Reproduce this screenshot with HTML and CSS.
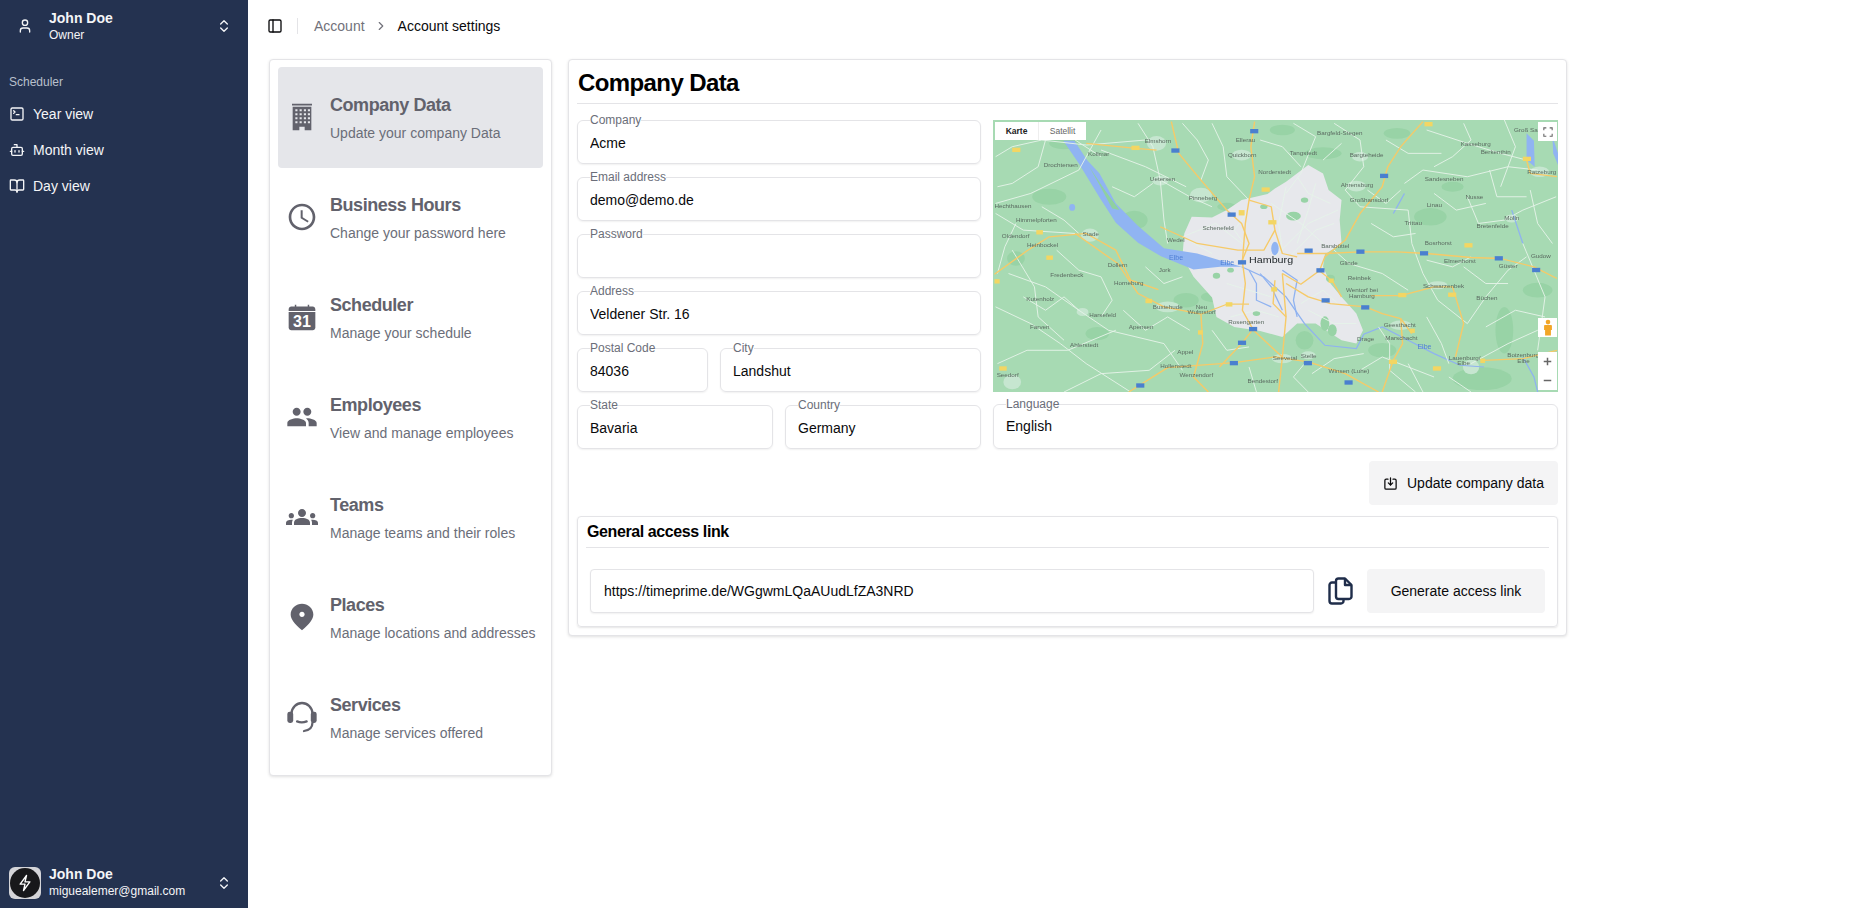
FILE: index.html
```html
<!DOCTYPE html>
<html lang="en">
<head>
<meta charset="utf-8">
<title>Account settings</title>
<link rel="stylesheet" href="styles.css">
</head>
<body>
<div class="app">
  <aside class="sidebar">
    <div class="team">
      <svg class="lu team-icon" viewBox="0 0 24 24"><path d="M19 21v-2a4 4 0 0 0-4-4H9a4 4 0 0 0-4 4v2"/><circle cx="12" cy="7" r="4"/></svg>
      <div class="who">
        <div class="who-name">John Doe</div>
        <div class="who-sub">Owner</div>
      </div>
      <svg class="lu updown" viewBox="0 0 24 24"><path d="m7 15 5 5 5-5"/><path d="m7 9 5-5 5 5"/></svg>
    </div>
    <div class="group-label">Scheduler</div>
    <nav class="nav">
      <a class="nav-row"><svg class="lu" viewBox="0 0 24 24"><path d="m7 11 2-2-2-2"/><path d="M11 13h4"/><rect x="3" y="3" width="18" height="18" rx="2"/></svg>Year view</a>
      <a class="nav-row"><svg class="lu" viewBox="0 0 24 24"><path d="M12 8V4H8"/><rect x="4" y="8" width="16" height="12" rx="2"/><path d="M2 14h2"/><path d="M20 14h2"/><path d="M15 13v2"/><path d="M9 13v2"/></svg>Month view</a>
      <a class="nav-row"><svg class="lu" viewBox="0 0 24 24"><path d="M12 7v14"/><path d="M3 18a1 1 0 0 1-1-1V4a1 1 0 0 1 1-1h5a4 4 0 0 1 4 4 4 4 0 0 1 4-4h5a1 1 0 0 1 1 1v13a1 1 0 0 1-1 1h-6a3 3 0 0 0-3 3 3 3 0 0 0-3-3z"/></svg>Day view</a>
    </nav>
    <div class="account">
      <div class="avatar">
        <div class="avatar-disc">
          <svg class="lu bolt" viewBox="0 0 24 24"><path d="M14 2 5.500 13.500H12L10 22l8.500-11.500H12z"/></svg>
        </div>
      </div>
      <div class="who">
        <div class="who-name">John Doe</div>
        <div class="who-sub">miguealemer@gmail.com</div>
      </div>
      <svg class="lu updown" viewBox="0 0 24 24"><path d="m7 15 5 5 5-5"/><path d="m7 9 5-5 5 5"/></svg>
    </div>
  </aside>

  <main class="main">
    <header class="topbar">
      <svg class="lu panel-icon" viewBox="0 0 24 24"><rect x="3" y="3" width="18" height="18" rx="2"/><path d="M9 3v18"/></svg>
      <span class="topbar-sep"></span>
      <span class="crumb">Account</span>
      <svg class="lu crumb-chev" viewBox="0 0 24 24"><path d="m9 18 6-6-6-6"/></svg>
      <span class="crumb-now">Account settings</span>
    </header>

    <div class="content">
      <section class="card menu">
        <a class="menu-item is-active">
          <svg class="menu-icon" viewBox="0 0 24 24"><path fill-rule="evenodd" d="M4.500 2h15v1.300h-15zM5 4.400h14V22h-5v-2.600h-4V22H5zM7 6.200v1.500h1.600V6.200zm3.200 0v1.500h1.600V6.200zm3.200 0v1.500H15V6.200zm3 0v1.500H18V6.200zM7 9.200v1.500h1.600V9.200zm3.200 0v1.500h1.600V9.200zm3.200 0v1.500H15V9.200zm3 0v1.500H18V9.200zM7 12.200v1.500h1.600v-1.500zm3.200 0v1.500h1.600v-1.500zm3.200 0v1.500H15v-1.500zm3 0v1.500H18v-1.500zM7 15.200v1.500h1.600v-1.500zm3.200 0v1.500h1.600v-1.500zm3.200 0v1.500H15v-1.500zm3 0v1.500H18v-1.500z"/></svg>
          <span class="menu-text"><span class="menu-title">Company Data</span><span class="menu-desc">Update your company Data</span></span>
        </a>
        <a class="menu-item">
          <svg class="menu-icon" viewBox="0 0 24 24"><path d="M11.990 2C6.470 2 2 6.480 2 12s4.470 10 9.990 10C17.520 22 22 17.520 22 12S17.520 2 11.990 2zM12 20c-4.420 0-8-3.580-8-8s3.580-8 8-8 8 3.580 8 8-3.580 8-8 8zm.5-13H11v6l5.250 3.150.75-1.230-4.500-2.670z"/></svg>
          <span class="menu-text"><span class="menu-title">Business Hours</span><span class="menu-desc">Change your password here</span></span>
        </a>
        <a class="menu-item">
          <svg class="menu-icon" viewBox="0 0 24 24"><path d="M2 6.200C2 5 2.900 4.100 4 4.100h2.600V2.900h1.100v1.200h8.600V2.900h1.100v1.200H20c1.100 0 2 .9 2 2.100v1.300H2z"/><path d="M2 8.300h20v11.600c0 1.100-.9 2-2 2H4c-1.100 0-2-.9-2-2z"/><text class="cal-num" x="12" y="19.800">31</text></svg>
          <span class="menu-text"><span class="menu-title">Scheduler</span><span class="menu-desc">Manage your schedule</span></span>
        </a>
        <a class="menu-item">
          <svg class="menu-icon" viewBox="0 0 24 24"><path d="M16 11c1.660 0 2.990-1.340 2.990-3S17.660 5 16 5c-1.660 0-3 1.340-3 3s1.340 3 3 3zm-8 0c1.660 0 2.990-1.340 2.990-3S9.660 5 8 5C6.340 5 5 6.340 5 8s1.340 3 3 3zm0 2c-2.330 0-7 1.170-7 3.500V19h14v-2.500c0-2.330-4.670-3.500-7-3.500zm8 0c-.29 0-.62.02-.97.05 1.160.84 1.970 1.970 1.970 3.450V19h6v-2.500c0-2.330-4.670-3.500-7-3.500z"/></svg>
          <span class="menu-text"><span class="menu-title">Employees</span><span class="menu-desc">View and manage employees</span></span>
        </a>
        <a class="menu-item">
          <svg class="menu-icon" viewBox="0 0 24 24"><path d="M12 12.750c1.630 0 3.070.39 4.240.9 1.080.48 1.760 1.560 1.760 2.730V18H6v-1.610c0-1.180.68-2.260 1.760-2.730 1.170-.52 2.610-.91 4.240-.91zM4 13c1.100 0 2-.9 2-2s-.9-2-2-2-2 .9-2 2 .9 2 2 2zm1.130 1.100c-.37-.06-.74-.1-1.130-.1-.99 0-1.930.21-2.780.58C.48 14.900 0 15.620 0 16.430V18h4.500v-1.610c0-.83.23-1.610.63-2.290zM20 13c1.100 0 2-.9 2-2s-.9-2-2-2-2 .9-2 2 .9 2 2 2zm4 3.430c0-.81-.48-1.530-1.220-1.850-.85-.37-1.790-.58-2.780-.58-.39 0-.76.04-1.130.1.4.68.63 1.460.63 2.290V18H24v-1.570zM12 6c1.660 0 3 1.340 3 3s-1.340 3-3 3-3-1.340-3-3 1.340-3 3-3z"/></svg>
          <span class="menu-text"><span class="menu-title">Teams</span><span class="menu-desc">Manage teams and their roles</span></span>
        </a>
        <a class="menu-item">
          <svg class="menu-icon" viewBox="0 0 24 24"><path d="M12 2c-4.200 0-8.500 3.220-8.500 8.200 0 3.320 2.830 7.250 8.500 11.800 5.670-4.550 8.500-8.480 8.500-11.800C20.500 5.220 16.200 2 12 2zm0 10c-1.100 0-2-.9-2-2s.9-2 2-2 2 .9 2 2-.9 2-2 2z"/></svg>
          <span class="menu-text"><span class="menu-title">Places</span><span class="menu-desc">Manage locations and addresses</span></span>
        </a>
        <a class="menu-item">
          <svg class="menu-icon" viewBox="0 0 24 24"><path class="hs-line" d="M4 9.500C4.500 4.500 8 1.500 12 1.500s7.500 3 8 8"/><rect x="1" y="8" width="4.400" height="8.500" rx="1.800"/><rect x="18.600" y="8" width="4.400" height="8.500" rx="1.800"/><path class="hs-line" d="M19.800 16.500c0 3-2.300 5.400-6.300 6"/><path class="hs-line" d="M8.300 15.300c2 .9 5 .9 7.200 0"/></svg>
          <span class="menu-text"><span class="menu-title">Services</span><span class="menu-desc">Manage services offered</span></span>
        </a>
      </section>

      <section class="card company">
        <h1 class="company-title">Company Data</h1>
        <div class="form-grid">
          <div class="form-stack">
            <fieldset class="field"><legend>Company</legend><input class="field-input" value="Acme"></fieldset>
            <fieldset class="field"><legend>Email address</legend><input class="field-input" value="demo@demo.de"></fieldset>
            <fieldset class="field"><legend>Password</legend><input class="field-input" type="password"></fieldset>
            <fieldset class="field"><legend>Address</legend><input class="field-input" value="Veldener Str. 16"></fieldset>
            <div class="field-row row-postal">
              <fieldset class="field"><legend>Postal Code</legend><input class="field-input" value="84036"></fieldset>
              <fieldset class="field"><legend>City</legend><input class="field-input" value="Landshut"></fieldset>
            </div>
          </div>

          <div class="map">
            <svg class="map-art" viewBox="8 30 1527 815" preserveAspectRatio="none">
              <rect x="8" y="30" width="1527" height="815" class="m-bg"/>
              <g class="m-patch">
                <ellipse cx="70" cy="445" rx="24" ry="22"/><ellipse cx="290" cy="670" rx="32" ry="20"/><ellipse cx="1190" cy="320" rx="44" ry="26"/>
                <ellipse cx="530" cy="570" rx="34" ry="22"/><ellipse cx="610" cy="560" rx="40" ry="16"/><ellipse cx="900" cy="130" rx="50" ry="18"/>
                <ellipse cx="1330" cy="805" rx="80" ry="34"/><ellipse cx="790" cy="60" rx="34" ry="16"/><ellipse cx="1390" cy="660" rx="24" ry="70"/>
                <ellipse cx="390" cy="330" rx="36" ry="28"/><ellipse cx="850" cy="690" rx="24" ry="28"/><ellipse cx="640" cy="290" rx="26" ry="12"/>
                <ellipse cx="160" cy="260" rx="46" ry="24"/><ellipse cx="1060" cy="720" rx="38" ry="22"/><ellipse cx="1250" cy="230" rx="30" ry="15"/>
                <ellipse cx="1480" cy="540" rx="40" ry="22"/><ellipse cx="200" cy="100" rx="40" ry="18"/><ellipse cx="1100" cy="70" rx="36" ry="16"/>
              </g>
              <g class="m-town">
                <ellipse cx="450" cy="100" rx="26" ry="22"/><ellipse cx="680" cy="135" rx="26" ry="16"/><ellipse cx="460" cy="212" rx="22" ry="14"/><ellipse cx="570" cy="255" rx="30" ry="22"/>
                <ellipse cx="270" cy="375" rx="24" ry="20"/><ellipse cx="1000" cy="140" rx="22" ry="14"/><ellipse cx="990" cy="228" rx="26" ry="16"/><ellipse cx="1410" cy="325" rx="18" ry="12"/>
                <ellipse cx="1485" cy="185" rx="26" ry="16"/><ellipse cx="1300" cy="770" rx="22" ry="22"/><ellipse cx="480" cy="590" rx="32" ry="16"/><ellipse cx="1110" cy="645" rx="30" ry="14"/>
                <ellipse cx="250" cy="605" rx="16" ry="12"/><ellipse cx="1210" cy="525" rx="26" ry="12"/><ellipse cx="60" cy="815" rx="24" ry="22"/><ellipse cx="790" cy="745" rx="28" ry="14"/><ellipse cx="860" cy="735" rx="20" ry="12"/>
              </g>
              <path class="m-city" d="M545 320 600 322 640 300 680 270 750 252 770 235 800 215 860 165 900 190 915 240 950 270 945 330 950 400 905 432 900 470 920 520 950 560 990 610 1008 660 990 700 950 690 880 640 830 640 790 680 730 662 660 650 612 620 600 562 550 500 520 440 525 370Z"/>
              <g class="m-patch">
                <ellipse cx="820" cy="318" rx="20" ry="13"/><ellipse cx="905" cy="640" rx="12" ry="22"/><ellipse cx="925" cy="660" rx="12" ry="18"/><ellipse cx="612" cy="497" rx="10" ry="9"/><ellipse cx="740" cy="290" rx="10" ry="7"/><ellipse cx="920" cy="505" rx="12" ry="11"/>
                <ellipse cx="850" cy="270" rx="10" ry="8"/><ellipse cx="650" cy="480" rx="9" ry="7"/><ellipse cx="720" cy="610" rx="10" ry="7"/>
              </g>
              <path class="m-water" d="M198 92 228 92 262 150 296 190 340 280 398 345 470 414 560 430 625 452 680 470 622 470 550 478 462 438 400 398 340 338 296 262 240 160Z"/>
              <path class="m-isle" d="M268 170 310 240 350 300 330 295 296 225Z"/>
              <path class="m-water" d="M1450 70 1470 92 1472 170 1450 150Z"/>
              <path class="m-water" d="M1520 80 1535 130 1535 165 1522 130Z"/>
              <ellipse class="m-water" cx="222" cy="292" rx="8" ry="10"/>
              <ellipse class="m-water" cx="770" cy="415" rx="10" ry="20"/>
              <g class="m-river">
                <path d="M680 470 740 500 800 560 850 640 905 705 990 715 1010 672 1060 650 1130 690 1200 730 1270 765 1335 770"/>
                <path d="M700 480 720 520 720 570 760 590"/>
                <path d="M730 490 760 530 790 600"/>
                <path d="M790 480 830 510 820 570 830 620"/>
                <path d="M1440 740 1470 800 1480 845"/>
                <path d="M1410 300 1440 400"/>
                <path d="M1090 310 1120 250"/>
              </g>
              <g class="m-white">
                <path d="M15 280 110 250 240 180 300 60"/><path d="M15 140 60 110 140 90 260 105 420 90"/><path d="M15 310 90 360 230 370"/>
                <path d="M50 490 150 530 240 600 320 660 470 700 520 780"/><path d="M15 590 110 640 190 700 260 760 380 845"/><path d="M60 420 120 530 130 620 200 690"/>
                <path d="M400 40 440 110 460 210 470 330 480 400"/><path d="M460 210 540 260 600 290"/><path d="M300 120 420 170 530 230"/>
                <path d="M600 40 630 110 640 200 700 270"/><path d="M820 40 880 80 840 190 800 250"/><path d="M930 40 1000 90 1010 170 960 240 1000 290 1130 300"/>
                <path d="M1120 220 1170 180 1290 200 1400 170 1480 180"/><path d="M1180 60 1290 100 1380 130 1450 150"/><path d="M1130 300 1140 400 1170 490 1210 570"/>
                <path d="M1290 260 1320 340 1390 330 1440 300 1530 260"/><path d="M1210 570 1290 640 1340 560 1400 480 1450 440"/><path d="M1130 540 1060 490 970 460 920 410"/>
                <path d="M1300 760 1400 700 1480 660 1530 640"/><path d="M1180 620 1220 700 1240 760"/><path d="M1440 400 1500 560 1480 720"/>
                <path d="M1050 650 1080 700 1080 780 1150 845"/><path d="M850 760 820 800 860 845"/><path d="M500 720 430 780 300 790 200 845"/>
                <path d="M20 760 100 720 210 720 340 660"/><path d="M760 280 840 340 900 400"/><path d="M760 450 860 340 940 300"/>
                <path d="M800 230 780 340 790 420"/><path d="M880 220 860 300 830 400"/><path d="M600 430 520 380 610 340 680 400"/>
                <path d="M650 620 720 600 780 620"/><path d="M860 600 930 640 990 640"/><path d="M1390 30 1420 110 1380 230"/>
                <path d="M120 40 150 90 130 170 60 220 20 230"/><path d="M240 40 230 90 300 140"/><path d="M140 290 200 330 240 370"/><path d="M70 340 40 410 20 490"/>
                <path d="M180 420 240 480 300 500 330 570 300 620"/><path d="M90 560 150 600 200 560 240 600"/><path d="M420 470 470 520 520 500"/><path d="M360 600 420 660 480 620 540 660"/>
                <path d="M600 660 640 720 700 710"/><path d="M700 770 720 845"/><path d="M870 790 930 745 1010 730"/><path d="M1000 780 1060 740 1130 770 1200 800"/>
                <path d="M1130 760 1170 845"/><path d="M1240 800 1300 845"/><path d="M1340 650 1420 600 1500 620"/><path d="M1280 470 1340 520 1400 520"/>
                <path d="M1180 450 1250 470 1300 440"/><path d="M1030 340 1090 380 1150 370"/><path d="M1020 240 1070 280 1110 240"/><path d="M1200 250 1260 300 1340 280"/>
                <path d="M1350 180 1370 260 1450 260"/><path d="M1460 240 1480 340 1520 400"/><path d="M1280 40 1300 90 1250 140 1200 170"/><path d="M1070 90 1130 130 1220 130"/>
                <path d="M950 100 900 150"/><path d="M730 90 790 110 840 170"/><path d="M520 40 560 90 590 150 570 210"/><path d="M330 230 390 260 440 220"/>
                <path d="M700 300 660 360 700 420"/><path d="M830 200 860 250 920 280"/><path d="M810 440 880 360 930 340"/><path d="M640 520 700 540 760 560"/><path d="M840 580 900 540 940 580"/>
              </g>
              <g class="m-road">
                <path d="M490 35 510 130 570 210 640 300 680 340 700 400 680 455"/>
                <path d="M715 35 705 110 715 200 700 270 690 340 682 455 690 520 682 600 712 660 770 720 790 740"/>
                <path d="M1170 35 1110 110 1075 170 1060 230 1000 310 960 390 905 440 890 482 840 522 790 490"/>
                <path d="M830 430 905 430 1000 425 1100 425 1180 430 1300 442 1380 445 1470 470 1532 505"/>
                <path d="M800 520 860 560 920 580 1015 590 1060 610 1110 625 1140 670"/>
                <path d="M790 490 800 620 790 740 780 845"/>
                <path d="M375 845 480 772 660 757 770 740 860 755 960 790 1050 845"/>
                <path d="M712 655 680 700 620 770"/>
                <path d="M12 492 100 422 160 380 260 370 340 420 380 510 455 538"/>
                <path d="M230 370 345 460 400 550 470 590 570 612 640 582 700 582"/>
                <path d="M570 612 575 700 550 800 590 845"/>
                <path d="M1030 556 1110 556 1200 530 1250 530 1280 640 1258 740"/>
                <path d="M1450 150 1460 190 1532 200"/>
                <path d="M700 270 760 290 770 360 740 420 670 420 560 400 460 350"/>
                <path d="M770 360 790 430 830 440"/>
                <path d="M890 482 925 512 950 560"/>
                <path d="M770 510 765 580 800 620"/>
                <path d="M1335 750 1440 745 1532 720"/>
                <path d="M450 120 395 115 260 100"/>
                <path d="M1110 625 1115 700 1090 750 1060 845"/>
              </g>
              <g class="m-shield-b">
                <rect x="490" y="115" width="22" height="13"/><rect x="703" y="57" width="22" height="13"/><rect x="1054" y="191" width="22" height="13"/>
                <rect x="642" y="307" width="22" height="13"/><rect x="850" y="415" width="22" height="13"/><rect x="990" y="418" width="22" height="13"/>
                <rect x="1162" y="423" width="22" height="13"/><rect x="1364" y="438" width="22" height="13"/><rect x="1465" y="473" width="22" height="13"/>
                <rect x="670" y="450" width="22" height="13"/><rect x="882" y="474" width="22" height="13"/><rect x="896" y="564" width="22" height="13"/>
                <rect x="1003" y="585" width="22" height="13"/><rect x="700" y="650" width="22" height="13"/><rect x="670" y="691" width="22" height="13"/>
                <rect x="648" y="752" width="22" height="13"/><rect x="848" y="752" width="22" height="13"/><rect x="958" y="810" width="22" height="13"/><rect x="395" y="819" width="22" height="13"/>
              </g>
              <g class="m-shield-y">
                <rect x="60" y="113" width="22" height="13"/><rect x="382" y="107" width="22" height="13"/><rect x="734" y="232" width="22" height="13"/><rect x="1440" y="140" width="22" height="13"/>
                <rect x="1174" y="36" width="22" height="13"/><rect x="672" y="300" width="16" height="16"/><rect x="752" y="330" width="22" height="13"/><rect x="125" y="360" width="18" height="13"/>
                <rect x="152" y="436" width="18" height="13"/><rect x="12" y="507" width="14" height="13"/><rect x="420" y="566" width="18" height="13"/><rect x="637" y="576" width="18" height="13"/>
                <rect x="760" y="531" width="16" height="13"/><rect x="915" y="505" width="14" height="13"/><rect x="1103" y="548" width="22" height="13"/><rect x="1238" y="547" width="22" height="13"/>
                <rect x="1282" y="399" width="22" height="13"/><rect x="1135" y="655" width="13" height="13"/><rect x="1078" y="748" width="22" height="13"/><rect x="1197" y="768" width="22" height="13"/>
                <rect x="562" y="660" width="13" height="13"/><rect x="1325" y="745" width="13" height="13"/><rect x="25" y="768" width="20" height="13"/>
              </g>
              <g class="m-label">
                <text x="418" y="100">Elmshorn</text><text x="664" y="96">Ellerau</text><text x="884" y="75">Bargfeld-Stegen</text><text x="265" y="138">Kollmar</text>
                <text x="145" y="171">Drochtersen</text><text x="643" y="140">Quickborn</text><text x="810" y="134">Tangstedt</text><text x="972" y="140">Bargteheide</text>
                <text x="725" y="192">Norderstedt</text><text x="432" y="213">Uetersen</text><text x="948" y="232">Ahrensburg</text><text x="1175" y="212">Sandesneben</text>
                <text x="537" y="270">Pinneberg</text><text x="972" y="276">Großhansdorf</text><text x="1180" y="290">Linau</text><text x="1285" y="266">Nusse</text>
                <text x="12" y="294">Hechthausen</text><text x="70" y="336">Himmelpforten</text><text x="574" y="361">Schenefeld</text><text x="1120" y="346">Trittau</text>
                <text x="1315" y="354">Bretenfelde</text><text x="1390" y="330">Mölln</text><text x="32" y="383">Oldendorf</text><text x="250" y="378">Stade</text>
                <text x="478" y="397">Wedel</text><text x="100" y="411">Heinbockel</text><text x="895" y="415">Barsbüttel</text><text x="1175" y="405">Bosrhorst</text>
                <text x="945" y="464">Glinde</text><text x="1227" y="458">Elmenhorst</text><text x="1375" y="473">Güster</text><text x="1462" y="442">Gudow</text>
                <text x="318" y="471">Dollern</text><text x="456" y="484">Jork</text><text x="163" y="499">Fredenbeck</text><text x="967" y="510">Reinbek</text>
                <text x="335" y="523">Horneburg</text><text x="1170" y="532">Schwarzenbek</text><text x="962" y="546">Wentorf bei</text><text x="970" y="564">Hamburg</text>
                <text x="98" y="573">Kutenholz</text><text x="1314" y="569">Büchen</text><text x="440" y="596">Buxtehude</text><text x="556" y="596">Neu</text>
                <text x="534" y="611">Wulmstorf</text><text x="268" y="620">Harsefeld</text><text x="644" y="642">Rosengarten</text><text x="1064" y="649">Geesthacht</text>
                <text x="108" y="656">Farven</text><text x="375" y="655">Apensen</text><text x="1068" y="689">Marschacht</text><text x="992" y="693">Drage</text>
                <text x="216" y="709">Ahlerstedt</text><text x="506" y="732">Appel</text><text x="764" y="748">Seevetal</text><text x="840" y="742">Stelle</text>
                <text x="1240" y="748">Lauenburg/</text><text x="1263" y="764">Elbe</text><text x="1398" y="740">Boizenburg/</text><text x="1425" y="757">Elbe</text>
                <text x="460" y="774">Hollenstedt</text><text x="512" y="801">Wenzendorf</text><text x="915" y="789">Winsen (Luhe)</text><text x="696" y="819">Bendestorf</text>
                <text x="18" y="800">Seedorf</text><text x="1416" y="65">Groß Sar</text><text x="1272" y="108">Kasseburg</text><text x="1326" y="131">Berkenthin</text><text x="1452" y="191">Ratzeburg</text>
              </g>
              <g class="m-label-water">
                <text x="484" y="449">Elbe</text><text x="622" y="463">Elbe</text><text x="1155" y="716">Elbe</text>
              </g>
              <text class="m-city-name" x="700" y="458">Hamburg</text>
            </svg>
            <div class="map-type">
              <span class="map-type-on">Karte</span>
              <span class="map-type-off">Satellit</span>
            </div>
            <div class="map-btn map-full">
              <svg class="map-full-icon" viewBox="0 0 12 12"><path d="M1 4V1h3M8 1h3v3M11 8v3H8M4 11H1V8"/></svg>
            </div>
            <div class="map-btn map-peg">
              <svg class="map-peg-icon" viewBox="0 0 12 20"><circle cx="6" cy="3.500" r="2.800"/><path d="M2.500 7h7c.8 0 1.200.6 1.200 1.300V13H9.500v6.500h-7V13H1.300V8.300C1.300 7.600 1.700 7 2.500 7z"/></svg>
            </div>
            <div class="map-zoom">
              <svg class="map-zoom-icon" viewBox="0 0 12 12"><path d="M6 1v10M1 6h10"/></svg>
              <svg class="map-zoom-icon" viewBox="0 0 12 12"><path d="M1 6h10"/></svg>
            </div>
          </div>

          <div class="field-row row-state">
            <fieldset class="field"><legend>State</legend><input class="field-input" value="Bavaria"></fieldset>
            <fieldset class="field"><legend>Country</legend><input class="field-input" value="Germany"></fieldset>
          </div>
          <fieldset class="field field-lang"><legend>Language</legend><input class="field-input" value="English"></fieldset>
        </div>

        <div class="form-actions">
          <button class="btn btn-update" type="button">
            <svg class="lu btn-icon" viewBox="0 0 24 24"><path d="M8 5H5a2 2 0 0 0-2 2v12a2 2 0 0 0 2 2h14a2 2 0 0 0 2-2V7a2 2 0 0 0-2-2h-3"/><path d="M12 3v11"/><path d="m8.500 11 3.500 3.500 3.500-3.500"/></svg>
            Update company data
          </button>
        </div>

        <section class="access">
          <h2 class="access-title">General access link</h2>
          <div class="access-row">
            <input class="access-input" value="https://timeprime.de/WGgwmLQaAUudLfZA3NRD">
            <svg class="copy-icon" viewBox="0 0 25 28"><path d="M8 5.500H4a2.500 2.500 0 0 0-2.500 2.500v16A2.500 2.500 0 0 0 4 26.500h9a2.500 2.500 0 0 0 2.500-2.500v-2"/><path d="M8 4a2.500 2.500 0 0 1 2.500-2.500H17l6.500 6.500v11.500a2.500 2.500 0 0 1-2.500 2.500H10.500A2.500 2.500 0 0 1 8 19.500z"/><path d="M17 1.500V8h6.500"/></svg>
            <button class="btn btn-generate" type="button">Generate access link</button>
          </div>
        </section>
      </section>
    </div>
  </main>
</div>
</body>
</html>
```

FILE: styles.css
```css
* { box-sizing: border-box; }
html, body { margin: 0; height: 100%; }
body {
  font-family: "Liberation Sans", Arial, sans-serif;
  font-size: 14px;
  color: #09090b;
  background: #fff;
  overflow: hidden;
}
.app { display: flex; height: 908px; }

/* generic lucide-style stroke icon */
.lu {
  width: 16px;
  height: 16px;
  flex: none;
  fill: none;
  stroke: currentColor;
  stroke-width: 2;
  stroke-linecap: round;
  stroke-linejoin: round;
}

/* sidebar */
.sidebar {
  width: 248px;
  flex: none;
  display: flex;
  flex-direction: column;
  background: #243250;
  color: #f4f5f7;
}
.team {
  display: flex;
  align-items: center;
  height: 36px;
  margin-top: 8px;
  padding-left: 17px;
  padding-right: 16px;
}
.team-icon { margin-right: 16px; }
.who { flex: 1; min-width: 0; margin-bottom: 3px; }
.who-name { font-size: 14px; line-height: 20px; font-weight: 700; }
.who-sub { font-size: 12px; line-height: 14px; }
.updown { margin-left: 8px; }
.group-label {
  margin-top: 30px;
  padding-left: 9px;
  font-size: 12px;
  line-height: 16px;
  color: #b9c0cc;
}
.nav { display: flex; flex-direction: column; margin-top: 6px; }
.nav-row {
  display: flex;
  align-items: center;
  gap: 8px;
  height: 36px;
  padding-left: 9px;
  font-size: 14px;
}
.account {
  margin-top: auto;
  display: flex;
  align-items: center;
  gap: 8px;
  padding: 0 16px 7px 9px;
}
.avatar {
  width: 32px;
  height: 32px;
  flex: none;
  display: flex;
  align-items: center;
  justify-content: center;
  border-radius: 6px;
  background: #d4d4d8;
}
.avatar-disc {
  width: 30px;
  height: 30px;
  display: flex;
  align-items: center;
  justify-content: center;
  border-radius: 50%;
  background: #18181b;
  color: #fff;
}
.bolt { width: 18px; height: 18px; stroke-width: 1.8; }

/* main */
.main { flex: 1; min-width: 0; display: flex; flex-direction: column; }
.topbar {
  height: 52px;
  flex: none;
  display: flex;
  align-items: center;
  padding-left: 19px;
}
.panel-icon { color: #09090b; }
.topbar-sep { width: 1px; height: 16px; margin: 0 16px 0 14px; background: #e4e4e7; }
.crumb { color: #71717a; font-size: 14px; }
.crumb-chev { width: 14px; height: 14px; margin: 0 10px 0 9px; color: #71717a; }
.crumb-now { font-size: 14px; color: #09090b; }

.content {
  display: flex;
  align-items: flex-start;
  gap: 16px;
  padding: 7px 0 0 21px;
}
.card {
  background: #fff;
  border: 1px solid #e4e4e7;
  border-radius: 4px;
  box-shadow: 0 1px 3px rgba(0, 0, 0, .12);
}

/* left menu */
.menu { width: 283px; flex: none; padding: 7px 8px 8px; }
.menu-item {
  display: flex;
  align-items: center;
  gap: 12px;
  height: 100px;
  padding-left: 8px;
  border-radius: 4px;
  color: #62626c;
}
.menu-item.is-active { background: #e5e6ea; height: 101px; padding-bottom: 1px; margin-bottom: -1px; }
.menu-icon { width: 32px; height: 32px; flex: none; fill: #62626c; }
.cal-num { fill: #fff; font-size: 12px; font-weight: 700; text-anchor: middle; }
.hs-line { fill: none; stroke: #62626c; stroke-width: 1.7; stroke-linecap: round; }
.menu-text { display: flex; flex-direction: column; gap: 4px; }
.menu-title {
  font-size: 18px;
  line-height: 28px;
  font-weight: 700;
  letter-spacing: -.025em;
}
.menu-desc { font-size: 14px; line-height: 20px; color: #6b6e79; }

/* company card */
.company { width: 999px; flex: none; padding: 8px; }
.company-title {
  margin: 0 0 10px;
  padding: 1px 0 6px 1px;
  border-bottom: 1px solid #e4e4e7;
  font-size: 24px;
  line-height: 28px;
  font-weight: 700;
  letter-spacing: -.025em;
  color: #000;
}
.form-grid {
  display: grid;
  grid-template-columns: 404px 1fr;
  column-gap: 12px;
  row-gap: 7px;
}
.form-stack { display: flex; flex-direction: column; gap: 7px; }
.field-row { display: grid; column-gap: 12px; }
.row-postal { grid-template-columns: 131px 1fr; }
.row-state { grid-template-columns: 196px 1fr; }
.field {
  min-width: 0;
  margin: 0;
  padding: 0 12px 4px;
  border: 1px solid #e4e4e7;
  border-radius: 6px;
  box-shadow: 0 1px 2px rgba(0, 0, 0, .06);
}
.field legend {
  padding: 0;
  font-size: 12px;
  line-height: 13px;
  color: #6b6e79;
}
.field-input {
  display: block;
  width: 100%;
  height: 32px;
  padding: 0;
  border: 0;
  outline: 0;
  background: transparent;
  font: 14px "Liberation Sans", Arial, sans-serif;
  color: #09090b;
}
.field-lang { margin-top: -1px; padding-bottom: 6px; }
.field-lang .field-input { height: 30px; }

/* map */
.map {
  position: relative;
  margin-top: 6px;
  overflow: hidden;
  background: #a8dab5;
  outline: 1px solid #d4d4d8;
  outline-offset: -1px;
}
.map-art { display: block; width: 100%; height: 272px; filter: blur(.55px); }
.m-bg { fill: #a7dab3; }
.m-patch ellipse { fill: #98d3a6; }
.m-town ellipse { fill: #c6e6d0; }
.m-city { fill: #e7e8ec; }
.m-water { fill: #90b4f2; }
.m-isle { fill: #8fd0a0; }
.m-river path { fill: none; stroke: #8fb2f0; stroke-width: 3.500; }
.m-white path { fill: none; stroke: #e6f3e9; stroke-width: 2.600; }
.m-road path { fill: none; stroke: #f6ca68; stroke-width: 3.800; stroke-linejoin: round; }
.m-shield-b rect { fill: #4a7fcf; }
.m-shield-y rect { fill: #f3d663; }
.m-label text { font-size: 17px; fill: #5a6a60; }
.m-label-water text { font-size: 19px; fill: #4f7fd4; }
.m-city-name { font-size: 29px; fill: #22282b; }
.map-type {
  position: absolute;
  left: 2px;
  top: 2px;
  width: 91px;
  height: 18px;
  display: flex;
  align-items: center;
  background: #fff;
  font-size: 8.500px;
}
.map-type-on { width: 43px; text-align: center; font-weight: 700; color: #222; }
.map-type-off { flex: 1; text-align: center; color: #666; border-left: 1px solid #eee; line-height: 18px; }
.map-btn {
  position: absolute;
  left: 545px;
  width: 19px;
  height: 19px;
  display: flex;
  align-items: center;
  justify-content: center;
  background: #fff;
}
.map-full { top: 2px; }
.map-peg { top: 198px; }
.map-full-icon { width: 10px; height: 10px; fill: none; stroke: #666; stroke-width: 1.3; }
.map-peg-icon { width: 10px; height: 17px; fill: #f2a627; }
.map-zoom {
  position: absolute;
  left: 545px;
  top: 232px;
  width: 19px;
  height: 38px;
  display: flex;
  flex-direction: column;
  align-items: center;
  justify-content: space-around;
  background: #fff;
}
.map-zoom-icon { width: 9px; height: 9px; fill: none; stroke: #666; stroke-width: 2; }

/* actions */
.form-actions { display: flex; justify-content: flex-end; margin: 12px 0 11px; }
.btn {
  display: flex;
  align-items: center;
  justify-content: center;
  height: 44px;
  border: 0;
  border-radius: 4px;
  background: #f4f4f5;
  font: 14px "Liberation Sans", Arial, sans-serif;
  color: #09090b;
}
.btn-update { width: 189px; gap: 9px; }
.btn-icon { width: 15px; height: 15px; }

/* access link */
.access {
  padding: 5px 8px 8px;
  border: 1px solid #e4e4e7;
  border-radius: 4px;
  box-shadow: 0 1px 2px rgba(0, 0, 0, .1);
}
.access-title {
  margin: 0;
  padding: 0 0 5px 1px;
  border-bottom: 1px solid #e4e4e7;
  font-size: 16px;
  line-height: 20px;
  font-weight: 700;
  letter-spacing: -.025em;
  color: #000;
}
.access-row {
  display: flex;
  align-items: center;
  margin: 20px 4px 5px;
}
.access-input {
  flex: 1;
  min-width: 0;
  height: 44px;
  padding: 0 13px;
  border: 1px solid #e4e4e7;
  border-radius: 4px;
  outline: 0;
  box-shadow: 0 1px 2px rgba(0, 0, 0, .06);
  font: 14px "Liberation Sans", Arial, sans-serif;
  color: #09090b;
}
.copy-icon {
  width: 25px;
  height: 28px;
  flex: none;
  margin: 0 14px;
  fill: none;
  stroke: #1f2d4a;
  stroke-width: 2.4;
  stroke-linejoin: round;
}
.btn-generate { width: 178px; flex: none; margin-top: 1px; }
```
